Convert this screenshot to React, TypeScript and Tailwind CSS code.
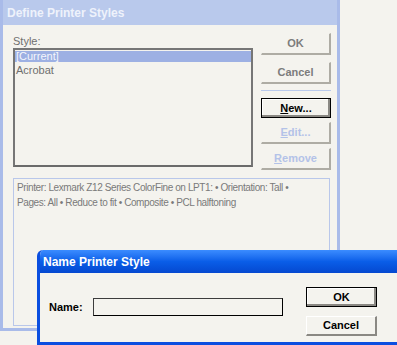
import React from 'react';

const font = { fontFamily: '"Liberation Sans", Arial, sans-serif' };

function BackButton({ label, under, disabled }: { label: string; under?: string; disabled?: boolean }) {
  return (
    <div
      className={`h-[22px] w-[70px] flex items-center justify-center text-[11px] font-bold border-t border-l border-[#f4f3ee] border-b-2 border-r-2 border-b-[#aeaca4] border-r-[#aeaca4] ${
        disabled ? 'text-[#b3c2e8]' : 'text-[#7c7c7c]'
      }`}
    >
      {under ? (
        <span>
          <span className="underline">{under}</span>
          {label.slice(under.length)}
        </span>
      ) : (
        label
      )}
    </div>
  );
}

export default function App() {
  return (
    <div className="relative w-[397px] h-[345px] overflow-hidden bg-[#f4f3ee]" style={font}>
      {/* background dialog (inactive) */}
      <div className="w-[340px] h-[331px] flex flex-col border-l-[3px] border-r-[3px] border-b-[3px] border-[#a9bbe9]">
        <div className="h-[25px] shrink-0 bg-[#b9c9ec] flex items-center pl-[4px] text-[12px] font-bold text-[#eef2fb]">
          Define Printer Styles
        </div>
        <div className="flex-1 pl-[10px] pr-[5px]">
          <div className="flex">
            <div className="w-[240px]">
              <div className="mt-[9px] h-[14px] text-[11px] leading-[14px] text-[#6f6f6f]">Style:</div>
              <div className="h-[119px] border-2 border-[#767676] border-b-[#6a6a6a] bg-[#f4f3ee] pt-[1px]">
                <div className="h-[11px] bg-[#9db0e3] text-[11px] leading-[11px] text-[#f4f6fc] pl-[1px]">[Current]</div>
                <div className="mt-[2px] text-[11px] leading-[12px] text-[#6f6f6f] pl-[1px]">Acrobat</div>
              </div>
            </div>
            <div className="ml-[8px] w-[70px] flex flex-col pt-[8px]">
              <BackButton label="OK" />
              <div className="mt-[7px]">
                <BackButton label="Cancel" />
              </div>
              <div className="mt-[6px] h-px bg-[#b9c9ec]" />
              <div className="mt-[7px] h-[20px] w-[70px] border border-black shadow-[inset_-2px_-2px_0_#8a8883,inset_1px_1px_0_#ffffff] flex items-center justify-center text-[11px] font-bold text-black">
                <span>
                  <span className="underline">N</span>ew...
                </span>
              </div>
              <div className="mt-[4px]">
                <BackButton label="Edit..." under="E" disabled />
              </div>
              <div className="mt-[4px]">
                <BackButton label="Remove" under="R" disabled />
              </div>
            </div>
          </div>
          <div className="mt-[8px] w-[317px] h-[148px] border border-[#b9c7ea] px-[3px] pt-[1px] text-[10px] leading-[15px] tracking-[-0.4px] whitespace-nowrap text-[#7a7a7a]">
            <div>Printer: Lexmark Z12 Series ColorFine on LPT1: • Orientation: Tall •</div>
            <div>Pages: All • Reduce to fit • Composite • PCL halftoning</div>
          </div>
        </div>
      </div>

      {/* foreground dialog (active) */}
      <div className="absolute left-[37px] top-[250px] w-[372px] h-[95px] flex flex-col rounded-tl-[6px] overflow-hidden border-l-[3px] border-b-[3px] border-[#0a4ee0]">
        <div className="h-[23px] shrink-0 bg-gradient-to-b from-[#3b8cff] via-[#0a5ee8] to-[#0548d0] flex items-center pl-[3px] text-[12px] font-bold text-white">
          Name Printer Style
        </div>
        <div className="flex-1 bg-[#f4f3ee] flex">
          <div className="flex items-center mt-[25px] h-[18px] ml-[9px]">
            <span className="w-[44px] text-[11px] font-bold text-black">Name:</span>
            <div className="w-[190px] h-[18px] border border-black border-t-[#3c3c3c] border-l-[#3c3c3c] bg-[#f4f3ee]" />
          </div>
          <div className="ml-[23px] mt-[14px] flex flex-col">
            <div className="w-[71px] h-[20px] border border-black shadow-[inset_-2px_-2px_0_#8a8883,inset_1px_1px_0_#ffffff] flex items-center justify-center text-[11px] font-bold text-black">
              OK
            </div>
            <div className="mt-[9px] w-[71px] h-[20px] border-t border-l border-t-white border-l-white border-b-2 border-r-2 border-b-[#8a8883] border-r-[#8a8883] flex items-center justify-center text-[11px] font-bold text-black">
              Cancel
            </div>
          </div>
        </div>
      </div>
    </div>
  );
}
